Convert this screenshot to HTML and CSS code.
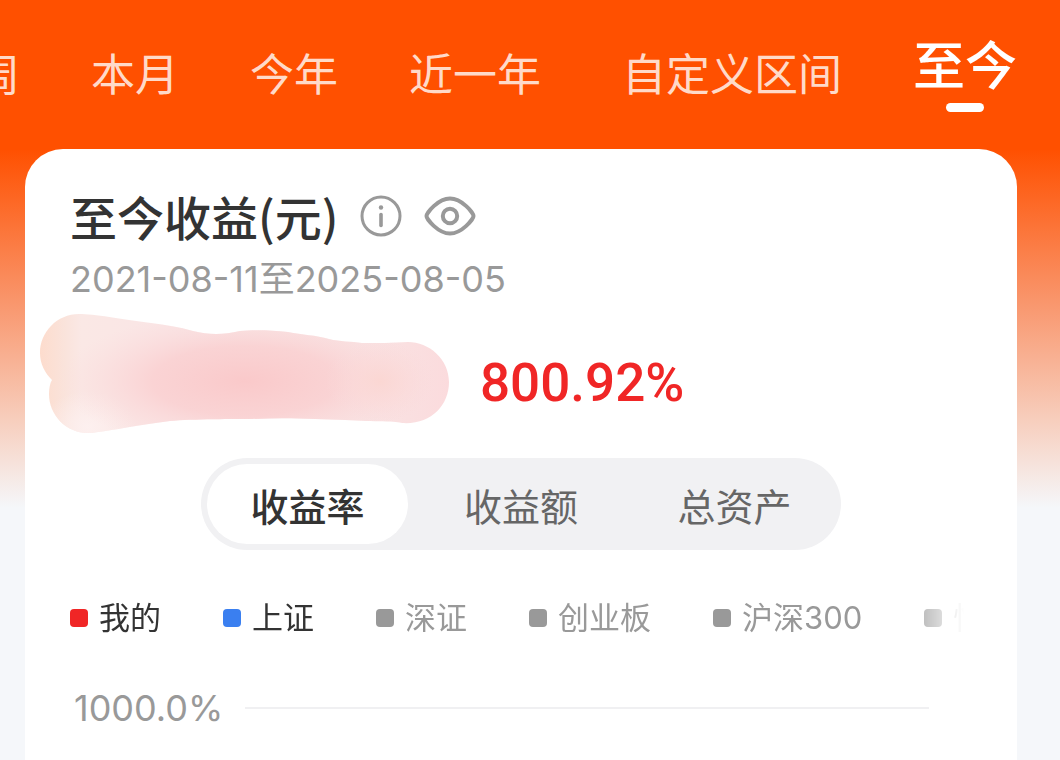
FILE: index.html
```html
<!DOCTYPE html>
<html lang="zh-CN">
  <head>
    <meta charset="UTF-8" />
    <meta name="viewport" content="width=device-width, initial-scale=1" />
    <title>至今收益</title>
    <link rel="stylesheet" href="styles.css">
  </head>
  <body>
    <nav class="periods" aria-label="收益区间">
      <button class="period">本周</button>
      <button class="period">本月</button>
      <button class="period">今年</button>
      <button class="period">近一年</button>
      <button class="period period-custom">自定义区间</button>
      <button class="period active" aria-current="true">至今</button>
    </nav>

    <main class="card">
      <div class="title-row">
        <h1>至今收益(元)</h1>
        <button class="icon-button" aria-label="收益说明">
          <svg width="42" height="42" viewBox="0 0 42 42" fill="none" stroke="currentColor">
            <circle cx="21" cy="21" r="19" stroke-width="3" />
            <path d="M21 19.500v11" stroke-width="3.600" stroke-linecap="round" />
            <circle cx="21" cy="12.500" r="2.200" fill="currentColor" stroke="none" />
          </svg>
        </button>
        <button class="icon-button" aria-label="隐藏金额">
          <svg width="52" height="42" viewBox="0 0 52 42" fill="none" stroke="currentColor" stroke-width="4">
            <path d="M2.500 21C2.500 18 14 3.500 26 3.500S49.500 18 49.500 21 38 38.500 26 38.500 2.500 24 2.500 21Z" stroke-linejoin="round" />
            <circle cx="26" cy="21" r="7.200" />
          </svg>
        </button>
      </div>
      <p class="date-range">2021-08-11至2025-08-05</p>

      <div class="result">
        <svg class="amount-mask" width="410" height="120" viewBox="0 2 410 120" role="img" aria-label="金额已隐藏">
          <defs>
            <radialGradient id="glow">
              <stop offset="0" stop-color="#fac9ca" />
              <stop offset="0.5" stop-color="#fad0d1" stop-opacity="0.85" />
              <stop offset="1" stop-color="#fadcdd" stop-opacity="0" />
            </radialGradient>
            <radialGradient id="warm">
              <stop offset="0" stop-color="#fbd7d3" />
              <stop offset="1" stop-color="#fbdbdc" stop-opacity="0" />
            </radialGradient>
            <radialGradient id="pale">
              <stop offset="0" stop-color="#fdf0ef" />
              <stop offset="1" stop-color="#fdf0ef" stop-opacity="0" />
            </radialGradient>
            <linearGradient id="base">
              <stop offset="0" stop-color="#fddccd" />
              <stop offset="0.06" stop-color="#fae3db" />
              <stop offset="0.1" stop-color="#fae8e5" />
              <stop offset="0.3" stop-color="#fae5e5" />
              <stop offset="0.8" stop-color="#f9e3e3" />
              <stop offset="1" stop-color="#fbdbdd" />
            </linearGradient>
            <clipPath id="stroke-shape">
              <path d="M39 3C17 3 0 21 0 42 0 53 5 62 12 69 10 72 9 77 9 83 9 104 26 122 48 122 59 122 91 115 130 110 152 108 196 108 212 108 245 106 278 108 305 109 335 111 358 110 362 112 390 114 409 95 409 71 409 48 389 31 368 31 352 32 337 32 322 32 311 30 300 31 289 28 276 24 262 24 248 21 230 19 213 19 200 20 183 24 169 24 153 20 139 16 126 14 111 12 81 8 54 3 39 3Z" />
            </clipPath>
          </defs>
          <g clip-path="url(#stroke-shape)">
            <rect width="410" height="124" fill="url(#base)" />
            <ellipse cx="48" cy="116" rx="48" ry="36" fill="url(#pale)" />
            <ellipse cx="205" cy="70" rx="185" ry="70" fill="url(#glow)" />
            <ellipse cx="340" cy="70" rx="55" ry="42" fill="url(#warm)" />
          </g>
        </svg>
        <strong class="rate">800.92%</strong>
      </div>

      <div class="segments" role="group" aria-label="图表类型">
        <button class="segment selected" aria-pressed="true">收益率</button>
        <button class="segment" aria-pressed="false">收益额</button>
        <button class="segment" aria-pressed="false">总资产</button>
      </div>

      <div class="legend" role="group" aria-label="对比指数">
        <button class="legend-item mine">我的</button>
        <button class="legend-item shanghai">上证</button>
        <button class="legend-item">深证</button>
        <button class="legend-item">创业板</button>
        <button class="legend-item">沪深300</button>
        <button class="legend-item">恒生</button>
      </div>

      <div class="chart-row">
        <span class="axis-label">1000.0%</span>
        <span class="grid-line"></span>
      </div>
    </main>
  </body>
</html>
```
FILE: styles.css
```css
:root {
  --brand: #ff5000;
  --page-bg: #f5f7fa;
  --text: #333;
  --muted: #999;
  --red: #f02626;
  --blue: #3a7ff0;
}

* {
  box-sizing: border-box;
}

body {
  margin: 0;
  min-height: 100vh;
  overflow: hidden;
  background: var(--page-bg) linear-gradient(var(--brand) 149px, #f9956b 300px, #f7cebd 420px, var(--page-bg) 508px) no-repeat;
  color: var(--text);
  font-family: Inter, "Noto Sans CJK SC", sans-serif;
}

button {
  flex: none;
  padding: 0;
  border: none;
  background: none;
  color: inherit;
  font: inherit;
  white-space: nowrap;
  cursor: pointer;
}

.periods {
  display: flex;
  justify-content: flex-end;
  align-items: center;
  gap: 71px;
  height: 149px;
  padding-right: 43px;
  overflow: hidden;
}

.period {
  color: #ffdac9;
  font-size: 44px;
  line-height: 60px;
}

.period-custom {
  margin-left: 10px;
}

.period.active {
  color: #fff;
  font-size: 52px;
  font-weight: 500;
}

.period.active::after {
  content: '';
  display: block;
  width: 38px;
  height: 9px;
  margin: 6px auto 0;
  border-radius: 5px;
  background: #fff;
}

.card {
  min-height: calc(100vh - 149px);
  margin: 0 43px 0 25px;
  padding: 40px 45px 0;
  border-radius: 38px 38px 0 0;
  background: #fff;
}

.title-row {
  display: flex;
  align-items: center;
  gap: 22px;
  height: 54px;
}

h1 {
  margin: 0;
  font-family: "Noto Sans CJK SC", sans-serif;
  font-size: 47px;
  font-weight: 500;
  line-height: 54px;
}

.icon-button {
  color: var(--muted);
}

.icon-button svg {
  display: block;
}

.date-range {
  margin: 14px 0 12px;
  color: var(--muted);
  font-size: 36px;
  line-height: 44px;
}

.result {
  display: flex;
  align-items: flex-end;
  gap: 30px;
  margin-left: -30px;
}

.amount-mask {
  flex: none;
}

.rate {
  color: var(--red);
  font-family: Roboto, sans-serif;
  font-size: 53px;
  font-weight: 500;
  line-height: 100px;
}

.segments {
  display: grid;
  grid-template-columns: repeat(3, 1fr);
  width: 71%;
  margin: 25px auto 0;
  border-radius: 46px;
  background: #f1f1f3;
}

.segment {
  height: 80px;
  margin: 6px;
  border-radius: 40px;
  color: #666;
  font-size: 38px;
}

.segment.selected {
  background: #fff;
  color: var(--text);
  font-weight: 500;
}

.legend {
  display: flex;
  gap: 62px;
  margin-top: 46px;
  margin-right: 8px;
  overflow: hidden;
  mask-image: linear-gradient(to left, transparent, #000 64px);
}

.legend-item {
  display: flex;
  align-items: center;
  gap: 11px;
  color: var(--muted);
  font-size: 31px;
  line-height: 44px;
}

.legend-item::before {
  content: '';
  width: 18px;
  height: 18px;
  border-radius: 4px;
  background: var(--muted);
}

.mine,
.shanghai {
  color: var(--text);
}

.mine::before {
  background: var(--red);
}

.shanghai::before {
  background: var(--blue);
}

.chart-row {
  display: flex;
  align-items: center;
  gap: 22px;
  margin-top: 46px;
  padding: 0 43px 0 4px;
}

.axis-label {
  color: var(--muted);
  font-size: 36px;
  line-height: 44px;
}

.grid-line {
  flex: 1;
  height: 2px;
  background: #f0f0f2;
}
```
